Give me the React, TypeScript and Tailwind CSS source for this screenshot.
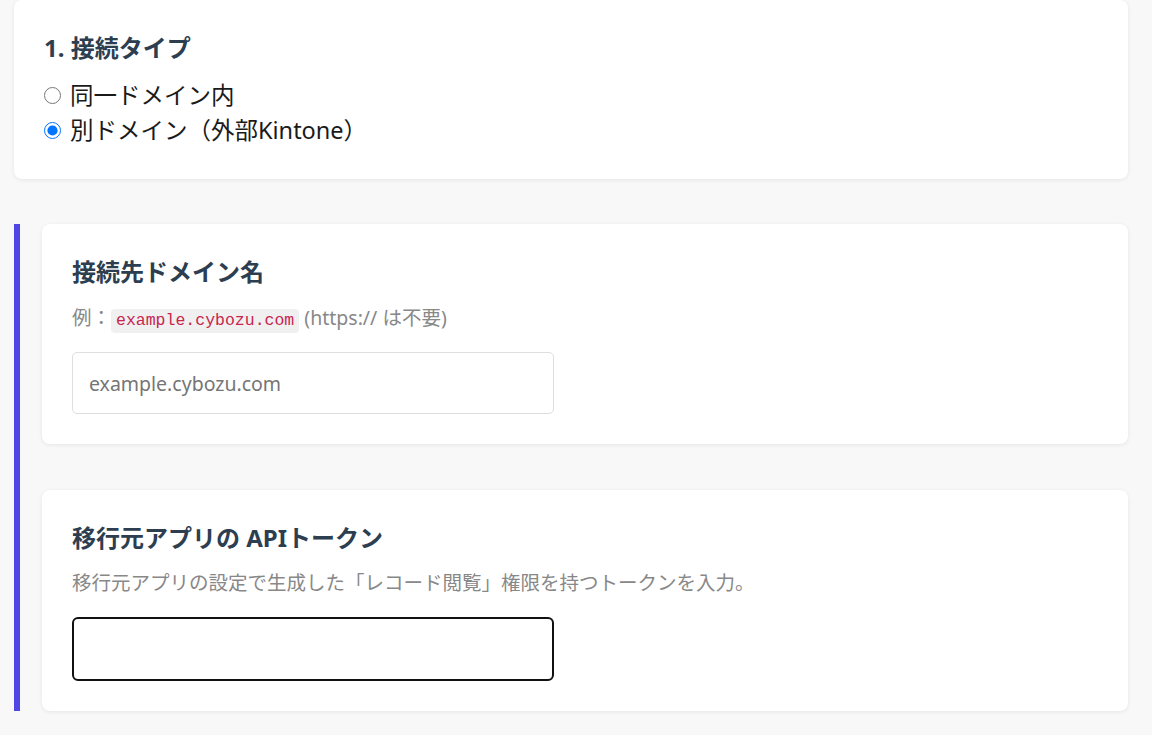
import { useState } from "react";

const Card = ({ children }: any) => {
    return (
        <section className="bg-white rounded-[8px] shadow-[0_1px_4px_rgba(0,0,0,0.08)] px-[30px] pt-[30px] pb-[30px]">
            {children}
        </section>
    );
};

const App = () => {
    const [type, setType] = useState("other");

    return (
        <div className="min-h-screen bg-[#f8f8f8] pl-[14px] pr-[24px] pb-[30px] font-['Noto_Sans','Noto_Sans_CJK_JP',sans-serif]">
            {/* 接続タイプ */}
            <section className="bg-white rounded-[8px] shadow-[0_1px_4px_rgba(0,0,0,0.08)] px-[30px] pt-[30px] pb-[31px]">
                <h3 className="text-[24px] font-bold leading-[36px] text-[#2c3e50]">1. 接続タイプ</h3>
                <div className="mt-[12px] flex flex-col text-[23.5px] leading-[35px] text-[#1a1a1a]">
                    <label className="flex items-center">
                        <input
                            type="radio"
                            name="type"
                            checked={type === "same"}
                            onChange={() => setType("same")}
                            className="w-[17px] h-[17px] m-0 mr-[9px] accent-[#0075ff]"
                        />
                        同一ドメイン内
                    </label>
                    <label className="flex items-center">
                        <input
                            type="radio"
                            name="type"
                            checked={type === "other"}
                            onChange={() => setType("other")}
                            className="w-[17px] h-[17px] m-0 mr-[9px] accent-[#0075ff]"
                        />
                        別ドメイン（外部Kintone）
                    </label>
                </div>
            </section>

            {/* 別ドメイン設定 */}
            <div className="mt-[45px] border-l-[6px] border-[#4f46e5] pl-[22px] flex flex-col gap-[46px]">
                <Card>
                    <h3 className="text-[24px] font-bold leading-[36px] text-[#2c3e50]">接続先ドメイン名</h3>
                    <p className="mt-[13px] text-[19.5px] leading-[29px] text-[#888]">
                        例：
                        <code className="inline-block bg-[#f0f0f0] text-[#c7254e] rounded-[4px] px-[5px] text-[16.5px] leading-[24px] font-['Liberation_Mono','Noto_Sans_CJK_JP',monospace]">
                            example.cybozu.com
                        </code>{" "}
                        (https:// は不要)
                    </p>
                    <input
                        type="text"
                        placeholder="example.cybozu.com"
                        className="mt-[19px] block w-[482px] h-[62px] px-[16px] border border-[#dedede] rounded-[5px] text-[19.5px] text-[#333] placeholder:text-[#757575] outline-none"
                    />
                </Card>
                <Card>
                    <h3 className="text-[24px] font-bold leading-[36px] text-[#2c3e50]">移行元アプリの APIトークン</h3>
                    <p className="mt-[12px] text-[19.5px] leading-[29px] text-[#888]">
                        移行元アプリの設定で生成した「レコード閲覧」権限を持つトークンを入力。
                    </p>
                    <input
                        type="text"
                        className="mt-[20px] block w-[482px] h-[64px] px-[16px] border-2 border-[#111] rounded-[6px] text-[19.5px] text-[#333] outline-none"
                    />
                </Card>
            </div>
        </div>
    );
};

export default App;
